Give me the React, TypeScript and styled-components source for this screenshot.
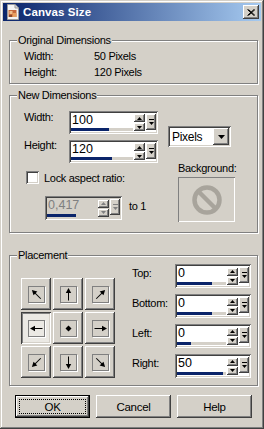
import React from "react";
import styled, { createGlobalStyle, css } from "styled-components";

const FACE = "#d4d0c8";
const NAVY = "#0a246a";

const Global = createGlobalStyle`
  html, body { margin: 0; padding: 0; background: ${FACE}; }
  body {
    font-family: "Liberation Sans", Arial, sans-serif;
    font-size: 11px;
    letter-spacing: -0.3px;
    color: #000;
  }
  * { box-sizing: border-box; }
`;

const raised = css`
  box-shadow: inset -1px -1px #404040, inset 1px 1px #fff,
    inset -2px -2px #808080, inset 2px 2px ${FACE};
`;
const sunken = css`
  box-shadow: inset 1px 1px #808080, inset -1px -1px #fff,
    inset 2px 2px #404040, inset -2px -2px ${FACE};
`;
const pressed = css`
  box-shadow: inset 1px 1px #404040, inset -1px -1px #fff,
    inset 2px 2px #808080, inset -2px -2px ${FACE};
`;

const Window = styled.div`
  width: 264px;
  height: 429px;
  padding: 3px;
  background: ${FACE};
  box-shadow: inset -1px -1px #404040, inset 1px 1px ${FACE},
    inset -2px -2px #808080, inset 2px 2px #fff;
  display: flex;
  flex-direction: column;
`;

const TitleBar = styled.div`
  height: 18px;
  background: linear-gradient(to right, ${NAVY}, #a6caf0);
  display: flex;
  align-items: center;
  padding: 0 2px;
`;

const TitleText = styled.span`
  flex: 1;
  margin-left: 2px;
  color: #fff;
  font-weight: bold;
  font-size: 11.5px;
  letter-spacing: 0.1px;
`;

const CloseBtn = styled.div`
  width: 16px;
  height: 14px;
  background: ${FACE};
  ${raised};
  display: flex;
  align-items: center;
  justify-content: center;
`;

const Body = styled.div`
  padding: 19px 3px 0 6px;
  display: flex;
  flex-direction: column;
`;

const Group = styled.div<{ $h: number; $mt: number }>`
  position: relative;
  height: ${(p) => p.$h}px;
  margin-top: ${(p) => p.$mt}px;
  border: 1px solid #808080;
  box-shadow: inset 1px 1px #fff, 1px 1px #fff;
`;

const Legend = styled.span`
  position: absolute;
  top: -8px;
  left: 7px;
  padding: 0 1px;
  line-height: 14px;
  background: ${FACE};
`;

const InfoGrid = styled.div`
  display: grid;
  grid-template-columns: 70px auto;
  grid-auto-rows: 16px;
  align-items: center;
  padding: 7px 0 0 14px;
`;

const DimBody = styled.div`
  display: flex;
  padding: 15px 0 0 14px;
`;

const LeftCol = styled.div`
  display: flex;
  flex-direction: column;
`;

const FieldRow = styled.div<{ $mt?: number }>`
  display: flex;
  align-items: flex-start;
  margin-top: ${(p) => p.$mt ?? 0}px;
`;

const FieldLabel = styled.span<{ $w: number; $top: number }>`
  width: ${(p) => p.$w}px;
  flex: none;
  line-height: 14px;
  margin-top: ${(p) => p.$top}px;
`;

const CheckRow = styled.div`
  display: flex;
  align-items: center;
  margin-top: 8px;
  padding-left: 2px;
  height: 13px;
`;

const CheckBox = styled.div`
  width: 13px;
  height: 13px;
  background: #fff;
  ${sunken};
`;

const CheckLabel = styled.span`
  margin-left: 5px;
`;

const RatioRow = styled.div`
  display: flex;
  align-items: flex-start;
  margin-top: 12px;
  padding-left: 21px;
`;

const ToText = styled.span`
  margin: 3px 0 0 7px;
  line-height: 14px;
`;

const RightCol = styled.div`
  display: flex;
  flex-direction: column;
  margin-left: 10px;
`;

const Select = styled.div`
  margin-top: 15px;
  width: 63px;
  height: 21px;
  padding: 2px;
  background: #fff;
  ${sunken};
  display: flex;
  align-items: center;
`;

const SelectText = styled.span`
  flex: 1;
  padding-left: 2px;
  font-size: 12px;
`;

const DropBtn = styled.div`
  width: 16px;
  height: 17px;
  background: ${FACE};
  ${raised};
  display: flex;
  align-items: center;
  justify-content: center;
`;

const BgLabel = styled.span`
  margin: 14px 0 0 10px;
  line-height: 14px;
`;

const BgBox = styled.div`
  margin: 2px 0 0 10px;
  width: 57px;
  height: 45px;
  box-shadow: inset 1px 1px #808080, inset -1px -1px #fff;
  display: flex;
  align-items: center;
  justify-content: center;
`;

/* Spin field */
const SpinBox = styled.div<{ $w: number; $h: number; $disabled?: boolean }>`
  width: ${(p) => p.$w}px;
  height: ${(p) => p.$h}px;
  padding: 2px;
  background: ${(p) => (p.$disabled ? FACE : "#fff")};
  ${sunken};
  display: flex;
  flex: none;
`;

const SpinMain = styled.div`
  flex: 1;
  display: flex;
  flex-direction: column;
  padding-bottom: 1px;
`;

const SpinText = styled.div<{ $disabled?: boolean }>`
  flex: 1;
  padding-left: 1px;
  font-size: 12.5px;
  line-height: 15px;
  letter-spacing: 0;
  color: ${(p) => (p.$disabled ? "#808080" : "#000")};
`;

const Track = styled.div`
  height: 3px;
  background: ${FACE};
  margin-right: 1px;
`;

const Fill = styled.div`
  height: 100%;
  background: ${NAVY};
`;

const SpinCol = styled.div`
  width: 12px;
  display: flex;
  flex-direction: column;
  gap: 1px;
  padding: 0 1px 0 0;
  justify-content: center;
`;

const SpinBtn = styled.div`
  height: 8px;
  width: 11px;
  background: ${FACE};
  ${raised};
  display: flex;
  align-items: center;
  justify-content: center;
`;

const SpinDrop = styled.div`
  width: 10px;
  margin: 0 0 2px 0;
  align-self: center;
  height: 16px;
  background: ${FACE};
  ${raised};
  display: flex;
  align-items: center;
  justify-content: center;
`;

/* Placement */
const PlaceBody = styled.div`
  display: flex;
  padding: 8px 0 0 11px;
`;

const PlaceGrid = styled.div`
  margin-top: 14px;
  display: grid;
  grid-template-columns: repeat(3, 30px);
  grid-auto-rows: 32px;
  column-gap: 2px;
  row-gap: 2px;
  align-self: flex-start;
`;

const PlaceBtn = styled.div<{ $on?: boolean }>`
  background: ${(p) => (p.$on ? "#ebe9e4" : FACE)};
  ${(p) => (p.$on ? pressed : raised)};
  display: flex;
  align-items: center;
  justify-content: center;
`;

const PlaceInner = styled.div`
  width: 17px;
  height: 17px;
  border: 1px solid #808080;
  box-shadow: 1px 1px #fff;
  display: flex;
  align-items: center;
  justify-content: center;
`;

const MarginCol = styled.div`
  margin-left: 17px;
  display: flex;
  flex-direction: column;
  gap: 6px;
`;

const ButtonRow = styled.div`
  display: flex;
  gap: 6px;
  margin-top: 9px;
  padding-left: 6px;
`;

const Btn = styled.div<{ $def?: boolean }>`
  width: 75px;
  height: 23px;
  background: ${FACE};
  display: flex;
  padding: 4px;
  ${(p) =>
    p.$def
      ? css`
          box-shadow: inset 0 0 0 1px #000, inset -2px -2px #404040,
            inset 2px 2px #fff, inset -3px -3px #808080, inset 3px 3px ${FACE};
        `
      : raised};
`;

const BtnLabel = styled.span<{ $focus?: boolean }>`
  flex: 1;
  display: flex;
  align-items: center;
  justify-content: center;
  font-size: 11.5px;
  border: 1px dotted ${(p) => (p.$focus ? "#000" : "transparent")};
`;

const Tri = ({ dir, color = "#000" }: { dir: "up" | "down"; color?: string }) => (
  <svg width="5" height="3" viewBox="0 0 5 3">
    <polygon points={dir === "up" ? "2.5,0 5,3 0,3" : "0,0 5,0 2.5,3"} fill={color} />
  </svg>
);

const BarTri = ({ color = "#000" }: { color?: string }) => (
  <svg width="5" height="6" viewBox="0 0 5 6">
    <rect x="0" y="0" width="5" height="1" fill={color} />
    <polygon points="0,3 5,3 2.5,6" fill={color} />
  </svg>
);

function Spin({
  w,
  h,
  value,
  fill,
  disabled,
}: {
  w: number;
  h: number;
  value: string;
  fill: number;
  disabled?: boolean;
}) {
  const c = disabled ? "#808080" : "#000";
  return (
    <SpinBox $w={w} $h={h} $disabled={disabled}>
      <SpinMain>
        <SpinText $disabled={disabled}>{value}</SpinText>
        <Track>
          <Fill style={{ width: fill }} />
        </Track>
      </SpinMain>
      <SpinCol>
        <SpinBtn>
          <Tri dir="up" color={c} />
        </SpinBtn>
        <SpinBtn>
          <Tri dir="down" color={c} />
        </SpinBtn>
      </SpinCol>
      <SpinDrop>
        <BarTri color={c} />
      </SpinDrop>
    </SpinBox>
  );
}

const Arrow = ({ angle }: { angle: number | null }) => (
  <svg width="15" height="15" viewBox="0 0 15 15">
    {angle === null ? (
      <polygon points="7.5,4.5 10.5,7.5 7.5,10.5 4.5,7.5" fill="#000" />
    ) : (
      <g transform={`rotate(${angle} 7.5 7.5)`}>
        <line x1="7.5" y1="3" x2="7.5" y2="13.5" stroke="#000" strokeWidth="1" />
        <polygon points="7.5,1 4.8,6 10.2,6" fill="#000" />
      </g>
    )}
  </svg>
);

const DocIcon = () => (
  <svg width="16" height="16" viewBox="0 0 16 16">
    <path d="M2.5 0.5 H10 L13.5 4 V15.5 H2.5 Z" fill="#f4f4f4" stroke="#9a9a9a" />
    <path d="M10 0.5 V4 H13.5" fill="#d8d8d8" stroke="#9a9a9a" />
    <rect x="3.5" y="6" width="8" height="7" fill="#c86a3c" />
    <rect x="4.5" y="7" width="3" height="3" fill="#f0c08c" />
    <rect x="7.5" y="9" width="4" height="4" fill="#e8a060" />
    <rect x="4" y="11" width="3" height="2" fill="#8c4a2a" />
  </svg>
);

const CloseX = () => (
  <svg width="8" height="7" viewBox="0 0 8 7">
    <path d="M0.5 0.5 L7 6.5 M1.5 0.5 L8 6.5 M7 0.5 L0.5 6.5 M8 0.5 L1.5 6.5" stroke="#000" strokeWidth="1" />
  </svg>
);

const NoIcon = () => (
  <svg width="30" height="30" viewBox="0 0 30 30">
    <circle cx="15" cy="15" r="12.5" fill="none" stroke="#a8a49c" strokeWidth="4.5" />
    <line x1="6.5" y1="6.5" x2="23.5" y2="23.5" stroke="#a8a49c" strokeWidth="4.5" />
  </svg>
);

const placements: { angle: number | null; on?: boolean }[] = [
  { angle: 315 },
  { angle: 0 },
  { angle: 45 },
  { angle: 270, on: true },
  { angle: null },
  { angle: 90 },
  { angle: 225 },
  { angle: 180 },
  { angle: 135 },
];

const margins = [
  { label: "Top:", value: "0", fill: 35 },
  { label: "Bottom:", value: "0", fill: 35 },
  { label: "Left:", value: "0", fill: 14 },
  { label: "Right:", value: "50", fill: 46 },
];

export default function App() {
  return (
    <>
      <Global />
      <Window>
        <TitleBar>
          <DocIcon />
          <TitleText>Canvas Size</TitleText>
          <CloseBtn>
            <CloseX />
          </CloseBtn>
        </TitleBar>
        <Body>
          <Group $h={44} $mt={0}>
            <Legend>Original Dimensions</Legend>
            <InfoGrid>
              <span>Width:</span>
              <span>50 Pixels</span>
              <span>Height:</span>
              <span>120 Pixels</span>
            </InfoGrid>
          </Group>

          <Group $h={138} $mt={11}>
            <Legend>New Dimensions</Legend>
            <DimBody>
              <LeftCol>
                <FieldRow>
                  <FieldLabel $w={45} $top={-1}>Width:</FieldLabel>
                  <Spin w={89} h={23} value="100" fill={38} />
                </FieldRow>
                <FieldRow $mt={6}>
                  <FieldLabel $w={45} $top={-2}>Height:</FieldLabel>
                  <Spin w={89} h={23} value="120" fill={41} />
                </FieldRow>
                <CheckRow>
                  <CheckBox />
                  <CheckLabel>Lock aspect ratio:</CheckLabel>
                </CheckRow>
                <RatioRow>
                  <Spin w={77} h={24} value="0,417" fill={29} disabled />
                  <ToText>to 1</ToText>
                </RatioRow>
              </LeftCol>
              <RightCol>
                <Select>
                  <SelectText>Pixels</SelectText>
                  <DropBtn>
                    <svg width="7" height="4" viewBox="0 0 7 4">
                      <polygon points="0,0 7,0 3.5,4" fill="#000" />
                    </svg>
                  </DropBtn>
                </Select>
                <BgLabel>Background:</BgLabel>
                <BgBox>
                  <NoIcon />
                </BgBox>
              </RightCol>
            </DimBody>
          </Group>

          <Group $h={131} $mt={22}>
            <Legend>Placement</Legend>
            <PlaceBody>
              <PlaceGrid>
                {placements.map((p, i) => (
                  <PlaceBtn key={i} $on={p.on}>
                    <PlaceInner>
                      <Arrow angle={p.angle} />
                    </PlaceInner>
                  </PlaceBtn>
                ))}
              </PlaceGrid>
              <MarginCol>
                {margins.map((m) => (
                  <FieldRow key={m.label}>
                    <FieldLabel $w={43} $top={2}>{m.label}</FieldLabel>
                    <Spin w={76} h={24} value={m.value} fill={m.fill} />
                  </FieldRow>
                ))}
              </MarginCol>
            </PlaceBody>
          </Group>

          <ButtonRow>
            <Btn $def>
              <BtnLabel $focus>OK</BtnLabel>
            </Btn>
            <Btn>
              <BtnLabel>Cancel</BtnLabel>
            </Btn>
            <Btn>
              <BtnLabel>Help</BtnLabel>
            </Btn>
          </ButtonRow>
        </Body>
      </Window>
    </>
  );
}
